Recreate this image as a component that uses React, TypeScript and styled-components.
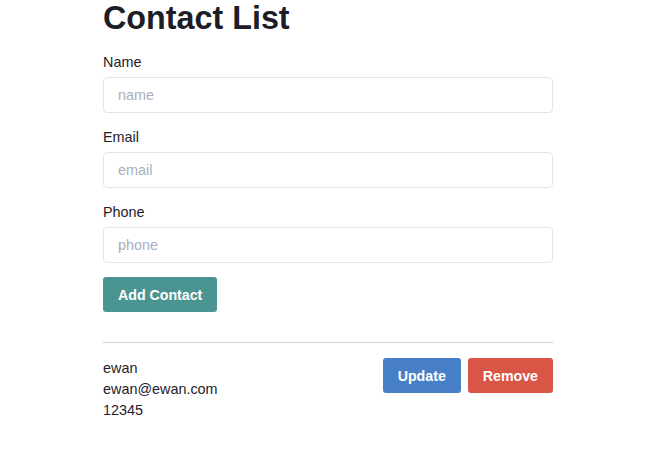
import React, { useState } from "react";
import styled, { createGlobalStyle } from "styled-components";

const Global = createGlobalStyle`
  html, body { margin: 0; padding: 0; background: #fff; }
  body { font-family: "Liberation Sans", Arial, sans-serif; color: #1f2029; }
  * { box-sizing: border-box; }
`;

const Page = styled.div`
  width: 450px;
  margin-left: 103px;
  display: flex;
  flex-direction: column;
`;

const Title = styled.h1`
  margin: 0;
  font-size: 32.3px;
  font-weight: 700;
  line-height: 37px;
  color: #1c1d26;
`;

const Form = styled.form`
  display: flex;
  flex-direction: column;
  margin-top: 17px;
`;

const Field = styled.div`
  display: flex;
  flex-direction: column;
  gap: 7px;
  margin-bottom: 16px;
`;

const Label = styled.label`
  font-size: 14.4px;
  line-height: 16px;
  color: #1f2029;
`;

const Input = styled.input`
  width: 100%;
  height: 36px;
  padding: 0 14px;
  border: 1px solid #e2e6ec;
  border-radius: 4px;
  font-family: "Liberation Sans", Arial, sans-serif;
  font-size: 14.4px;
  color: #1f2029;
  outline: none;
  &::placeholder { color: #a7b0bf; }
`;

const Button = styled.button<{ $bg: string }>`
  height: 35px;
  padding: 0 15px;
  border: none;
  border-radius: 3px;
  background: ${(p) => p.$bg};
  color: #fff;
  font-family: "Liberation Sans", Arial, sans-serif;
  font-size: 14.2px;
  font-weight: 700;
  cursor: pointer;
`;

const AddRow = styled.div`
  display: flex;
  margin-top: -2px;
`;

const Divider = styled.hr`
  border: none;
  border-top: 1px solid #d0d0d4;
  margin: 30px 0 15px;
`;

const ContactRow = styled.div`
  display: flex;
  justify-content: space-between;
  align-items: flex-start;
`;

const Info = styled.div`
  display: flex;
  flex-direction: column;
  font-size: 14.4px;
  line-height: 21px;
  color: #1f2029;
`;

const Actions = styled.div`
  display: flex;
  gap: 7px;
`;

export default function App() {
  const [contacts] = useState([{ name: "ewan", email: "ewan@ewan.com", phone: "12345" }]);
  return (
    <>
      <Global />
      <Page>
        <Title>Contact List</Title>
        <Form onSubmit={(e) => e.preventDefault()}>
          <Field>
            <Label>Name</Label>
            <Input placeholder="name" />
          </Field>
          <Field>
            <Label>Email</Label>
            <Input placeholder="email" />
          </Field>
          <Field>
            <Label>Phone</Label>
            <Input placeholder="phone" />
          </Field>
          <AddRow>
            <Button type="submit" $bg="#4a9591">Add Contact</Button>
          </AddRow>
        </Form>
        <Divider />
        {contacts.map((c) => (
          <ContactRow key={c.email}>
            <Info>
              <span>{c.name}</span>
              <span>{c.email}</span>
              <span>{c.phone}</span>
            </Info>
            <Actions>
              <Button $bg="#487fc9">Update</Button>
              <Button $bg="#d95545">Remove</Button>
            </Actions>
          </ContactRow>
        ))}
      </Page>
    </>
  );
}
